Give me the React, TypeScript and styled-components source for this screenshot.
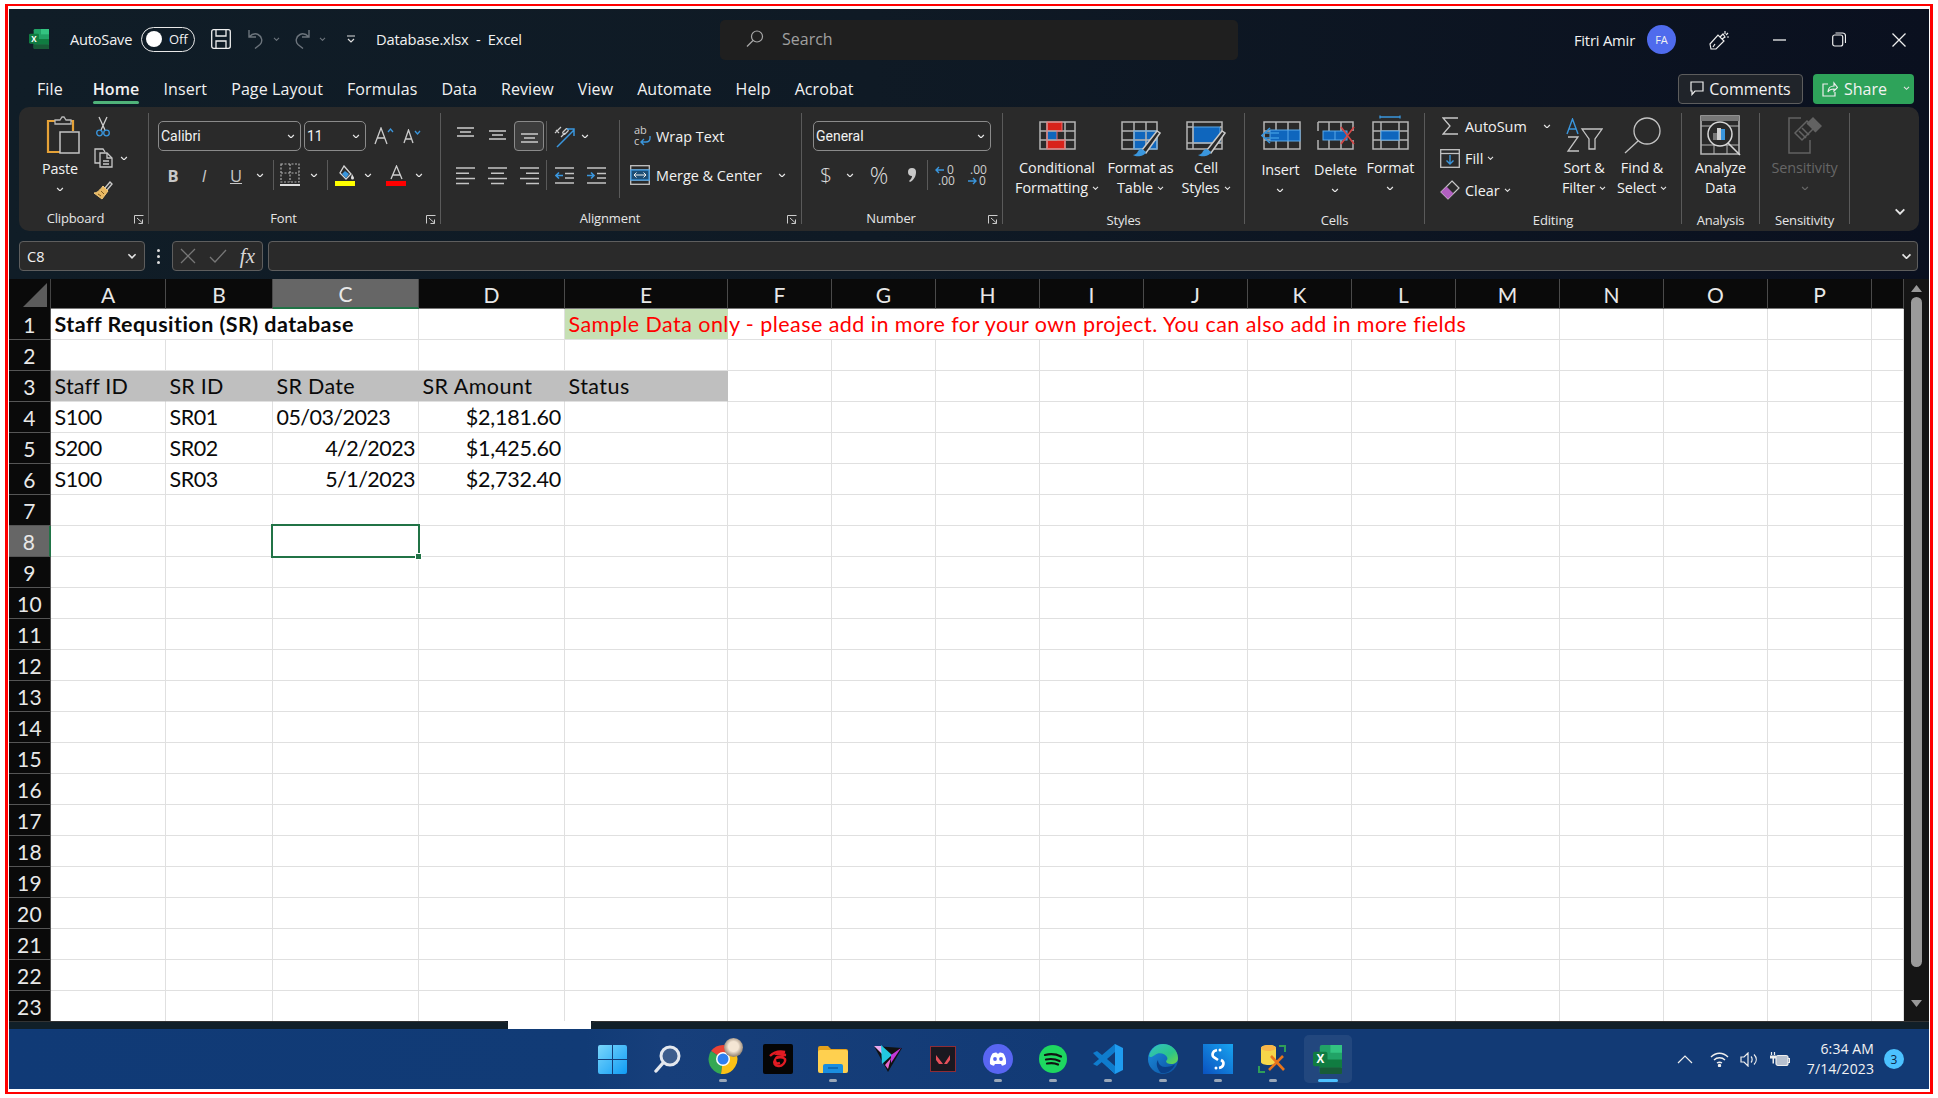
import React from 'react'
import styled, { createGlobalStyle } from 'styled-components'

const UI = `"Open Sans", "Noto Sans", sans-serif`
const CELL = `"Lato", "Liberation Sans", sans-serif`
const G = '#b4b4b4'
const B = '#3a96dd'

const GlobalStyle = createGlobalStyle`
  html, body { margin: 0; padding: 0; background: #fff; }
  #root { width: 1938px; height: 1098px; overflow: hidden; }
`

/* ---------- frame ---------- */
const Page = styled.div`
  width: 1938px;
  height: 1098px;
  padding: 4px 0 0 5px;
  box-sizing: border-box;
  background: #fff;
`
const Frame = styled.div`
  width: 1928px;
  height: 1090px;
  box-sizing: border-box;
  border-style: solid;
  border-color: #f00;
  border-width: 2px 3px;
  padding: 3px 1px;
`
const Screen = styled.div`
  width: 1920px;
  height: 1080px;
  display: flex;
  flex-direction: column;
  background: linear-gradient(90deg, #101d27 0%, #0f1a25 45%, #0a101f 100%);
  font-family: ${UI};
  color: #f2f2f2;
  overflow: hidden;
`

/* ---------- title bar ---------- */
const TitleBar = styled.div`
  height: 61px;
  display: grid;
  grid-template-columns: 711px 518px 1fr;
  align-items: center;
  flex-shrink: 0;
`
const TitleLeft = styled.div`
  display: flex;
  align-items: center;
  padding: 0 0 1px 20px;
  font-size: 14.6px;
`
const AutoSaveLabel = styled.span`
  margin: 0 8px 0 21px;
  width: 63px;
  white-space: nowrap;
  letter-spacing: -0.2px;
`
const Toggle = styled.div`
  width: 54px;
  height: 25px;
  box-sizing: border-box;
  border: 1.5px solid #e8e8e8;
  border-radius: 13px;
  display: flex;
  align-items: center;
  gap: 7px;
  padding-left: 4px;
  font-size: 13px;
  margin-right: 16px;
`
const Knob = styled.i`
  width: 16px;
  height: 16px;
  border-radius: 50%;
  background: #fff;
`
const QuickGap = styled.span<{ $w: number }>`
  width: ${p => p.$w}px;
  flex-shrink: 0;
`
const DocName = styled.span`
  white-space: pre;
  font-size: 14.7px;
  letter-spacing: -0.15px;
`
const SearchBox = styled.div`
  height: 40px;
  border-radius: 5px;
  background: #1f1f1f;
  display: flex;
  align-items: center;
  padding: 0 0 2px 26px;
  box-sizing: border-box;
  gap: 18px;
  color: #a0a0a0;
  font-size: 16px;
`
const TitleRight = styled.div`
  display: flex;
  align-items: center;
  justify-content: flex-end;
  font-size: 14.8px;
`
const UserName = styled.span`
  margin-right: 12px;
  letter-spacing: -0.2px;
`
const Avatar = styled.div`
  width: 29px;
  height: 29px;
  border-radius: 50%;
  background: #4f6bed;
  display: flex;
  align-items: center;
  justify-content: center;
  font-size: 11px;
  margin-right: 13px;
`
const CaptionButton = styled.div`
  width: 60px;
  display: flex;
  justify-content: center;
  align-items: center;
`

/* ---------- tabs ---------- */
const TabRow = styled.div`
  height: 37px;
  box-sizing: border-box;
  display: flex;
  align-items: center;
  padding: 0 15px 0 28px;
  gap: 24px;
  flex-shrink: 0;
  font-size: 16px;
`
const Tab = styled.span<{ $active?: boolean; $after?: number }>`
  position: relative;
  white-space: nowrap;
  letter-spacing: 0.1px;
  font-weight: ${p => (p.$active ? 600 : 400)};
  margin-right: ${p => p.$after || 0}px;
  ${p =>
    p.$active &&
    `&::after {
      content: '';
      position: absolute;
      left: 0;
      right: 0;
      bottom: -4px;
      height: 3px;
      border-radius: 2px;
      background: #4fb37a;
    }`}
`
const RightActions = styled.div`
  margin-left: auto;
  display: flex;
  gap: 10px;
`
const CommentsButton = styled.div`
  width: 125px;
  height: 30px;
  box-sizing: border-box;
  border: 1px solid #5d5d5d;
  border-radius: 4px;
  background: #20242a;
  display: flex;
  align-items: center;
  justify-content: center;
  gap: 5px;
  font-size: 16px;
`
const ShareButton = styled.div`
  width: 101px;
  height: 30px;
  border-radius: 4px;
  background: #2ea35a;
  display: flex;
  align-items: center;
  padding-left: 9px;
  gap: 6px;
  box-sizing: border-box;
  font-size: 16px;
`

/* ---------- ribbon ---------- */
const Ribbon = styled.div`
  margin: 0 10px;
  height: 124px;
  flex-shrink: 0;
  background: #2a2a2a;
  border-radius: 10px;
  display: flex;
  padding-top: 6px;
  box-sizing: border-box;
  position: relative;
  font-size: 14.4px;
`
const Group = styled.div<{ $w: number; $plain?: boolean }>`
  position: relative;
  width: ${p => p.$w}px;
  height: 111px;
  flex-shrink: 0;
  box-sizing: border-box;
  display: flex;
  flex-direction: column;
  border-right: ${p => (p.$plain ? 'none' : '1px solid #5a5a5a')};
`
const GroupBody = styled.div<{ $pad?: number }>`
  flex: 1;
  min-height: 0;
  display: flex;
  padding-left: ${p => p.$pad || 0}px;
`
const GroupLabel = styled.div<{ $drop?: number; $inset?: number }>`
  height: 20px;
  line-height: 20px;
  font-size: 13px;
  letter-spacing: -0.15px;
  color: #e6e6e6;
  text-align: center;
  padding-right: ${p => p.$inset || 0}px;
  margin-bottom: -${p => p.$drop ?? 4}px;
  flex-shrink: 0;
`
const Launcher = styled.div`
  position: absolute;
  right: 4px;
  bottom: 0;
  display: flex;
`
const Stack = styled.div<{ $w?: number }>`
  display: flex;
  flex-direction: column;
  gap: 9px;
  padding-top: 8px;
  ${p => (p.$w ? `width: ${p.$w}px;` : '')}
  flex-shrink: 0;
`
const ToolRow = styled.div`
  height: 30px;
  display: flex;
  align-items: center;
`
const Tool = styled.div<{ $w: number; $gap?: number }>`
  width: ${p => p.$w}px;
  margin-left: ${p => p.$gap || 0}px;
  flex-shrink: 0;
  display: flex;
  justify-content: center;
  align-items: center;
`
const ToolBox = styled(Tool)`
  height: 30px;
  box-sizing: border-box;
  border: 1px solid #8a8a8a;
  border-radius: 4px;
  background: #3d3d3d;
`
const FormatLetter = styled.span<{ $kind: 'b' | 'i' | 'u' }>`
  font-size: 16.5px;
  color: #c8c8c8;
  font-weight: ${p => (p.$kind === 'b' ? 700 : 400)};
  font-style: ${p => (p.$kind === 'i' ? 'italic' : 'normal')};
  text-decoration: ${p => (p.$kind === 'u' ? 'underline' : 'none')};
`
const NumberGlyph = styled.span<{ $size: number }>`
  font-size: ${p => p.$size}px;
  font-weight: 300;
  color: #dcdcdc;
`
const Sep = styled.i<{ $gap?: number }>`
  width: 1px;
  height: 30px;
  background: #5a5a5a;
  margin-left: ${p => p.$gap || 0}px;
  flex-shrink: 0;
`
const VSep = styled.i`
  width: 1px;
  height: 78px;
  margin-top: 7px;
  background: #5a5a5a;
  flex-shrink: 0;
`
const Combo = styled.div<{ $w: number; $gap?: number }>`
  width: ${p => p.$w}px;
  margin-left: ${p => p.$gap || 0}px;
  height: 30px;
  box-sizing: border-box;
  border: 1px solid #8a8a8a;
  border-radius: 5px;
  display: flex;
  align-items: center;
  justify-content: space-between;
  padding: 0 5px 0 2px;
  font-family: "Roboto", ${UI};
  font-size: 14px;
  flex-shrink: 0;
`
const TextTool = styled.div<{ $x?: number; $gap?: number }>`
  display: flex;
  align-items: center;
  gap: ${p => p.$gap ?? 4}px;
  margin-left: ${p => p.$x || 0}px;
  white-space: nowrap;
`
const BigButton = styled.div<{ $w: number; $muted?: boolean }>`
  width: ${p => p.$w}px;
  flex-shrink: 0;
  padding-top: 2px;
  display: flex;
  flex-direction: column;
  align-items: center;
  color: ${p => (p.$muted ? '#666' : 'inherit')};
`
const IconSlot = styled.div<{ $top?: number; $left?: number }>`
  height: 43px;
  box-sizing: border-box;
  padding-top: ${p => p.$top || 0}px;
  padding-left: ${p => p.$left || 0}px;
  display: flex;
  align-items: flex-start;
  justify-content: center;
`
const BigText = styled.div<{ $dy?: number }>`
  margin-top: ${p => p.$dy || 0}px;
  line-height: 20px;
  text-align: center;
  white-space: nowrap;
  display: flex;
  flex-direction: column;
  align-items: center;
  letter-spacing: -0.1px;
`
const BigLine = styled.span`
  display: flex;
  align-items: center;
  gap: 4px;
  height: 20px;
`
const EditStack = styled.div`
  width: 118px;
  padding-left: 14px;
  margin-top: -3px;
  display: flex;
  flex-direction: column;
  flex-shrink: 0;
`
const EditRow = styled.div`
  height: 32px;
  display: flex;
  align-items: center;
  gap: 4px;
  white-space: nowrap;
`
const EditIcon = styled.div`
  width: 22px;
  display: flex;
  justify-content: center;
`
const ClipStack = styled.div`
  display: flex;
  flex-direction: column;
  margin-top: 3px;
  gap: 12px;
  margin-left: -3px;
`
const ClipTool = styled.div`
  height: 20px;
  display: flex;
  align-items: center;
  gap: 7px;
`
const CollapseSlot = styled.div`
  position: absolute;
  right: 13px;
  bottom: 16px;
  display: flex;
`

/* ---------- formula bar ---------- */
const FormulaRow = styled.div`
  display: flex;
  align-items: center;
  height: 30px;
  margin: 10px 11px 8px 10px;
  flex-shrink: 0;
`
const NameBox = styled.div`
  width: 126px;
  height: 30px;
  box-sizing: border-box;
  border: 1px solid #5e5e5e;
  border-radius: 4px;
  background: #2a2a2a;
  display: flex;
  align-items: center;
  justify-content: space-between;
  padding: 0 7px;
  font-size: 14.5px;
`
const Dots = styled.div`
  width: 27px;
  display: flex;
  flex-direction: column;
  align-items: center;
  gap: 3px;
  & i { width: 3px; height: 3px; background: #ddd; border-radius: 50%; }
`
const FxBox = styled.div`
  width: 91px;
  height: 30px;
  box-sizing: border-box;
  border: 1px solid #5e5e5e;
  border-radius: 4px;
  background: #2a2a2a;
  display: flex;
  align-items: center;
  justify-content: space-between;
  padding: 0 7px;
  margin-right: 5px;
`
const FxMark = styled.span`
  font-family: "Liberation Serif", serif;
  font-style: italic;
  font-size: 21px;
  color: #d8d8d8;
`
const FormulaInput = styled.div`
  flex: 1;
  height: 30px;
  box-sizing: border-box;
  border: 1px solid #5e5e5e;
  border-radius: 4px;
  background: #2a2a2a;
  display: flex;
  align-items: center;
  justify-content: flex-end;
  padding-right: 5px;
`

/* ---------- sheet ---------- */
const SheetRow = styled.div`
  height: 742px;
  display: flex;
  flex-shrink: 0;
`
const SheetGrid = styled.div`
  width: 1895px;
  height: 742px;
  overflow: hidden;
  display: grid;
  grid-template-columns: 42px 115px 107px 146px 146px 163px repeat(11, 104px) 32px;
  grid-auto-rows: 31px;
  grid-template-rows: 30px;
  background: #fff;
`
const Corner = styled.div`
  background: #0a0a0a;
  display: flex;
  align-items: flex-end;
  justify-content: flex-end;
  padding: 0 3px 2px 0;
  border-right: 1px solid #444;
  box-sizing: border-box;
`
const ColHead = styled.div<{ $sel?: boolean }>`
  background: ${p => (p.$sel ? '#666' : '#0a0a0a')};
  border-right: 1px solid #4a4a4a;
  border-bottom: ${p => (p.$sel ? '2px solid #217346' : '1px solid #777')};
  box-sizing: border-box;
  padding-top: 1px;
  display: flex;
  align-items: center;
  justify-content: center;
  font-family: ${CELL};
  font-size: 21px;
  color: #e8e8e8;
`
const RowHead = styled.div<{ $sel?: boolean }>`
  background: ${p => (p.$sel ? '#666' : '#0a0a0a')};
  border-bottom: 1px solid #555;
  border-right: ${p => (p.$sel ? '2px solid #217346' : '1px solid #555')};
  box-sizing: border-box;
  display: flex;
  align-items: center;
  justify-content: center;
  font-family: ${CELL};
  font-size: 21px;
  letter-spacing: 0.3px;
  color: #e8e8e8;
`
const Cell = styled.div<{ $fill?: string; $open?: boolean; $right?: boolean; $bold?: boolean; $color?: string; $ls?: number }>`
  position: relative;
  box-sizing: border-box;
  background: ${p => p.$fill || 'transparent'};
  border-bottom: 1px solid #e0e0e0;
  border-right: ${p => (p.$open ? 'none' : `1px solid ${p.$fill ? p.$fill : '#e0e0e0'}`)};
  display: flex;
  align-items: center;
  justify-content: ${p => (p.$right ? 'flex-end' : 'flex-start')};
  padding: 0 3px 0 3.5px;
  font-family: ${CELL};
  font-size: 21.5px;
  letter-spacing: ${p => p.$ls ?? 0.45}px;
  font-weight: ${p => (p.$bold ? 700 : 400)};
  color: ${p => p.$color || '#0a0a0a'};
  white-space: nowrap;
`
const CellText = styled.span`
  position: relative;
  z-index: 1;
`
const Selection = styled.div`
  position: absolute;
  left: -2px;
  top: -2px;
  right: -2px;
  bottom: -2px;
  border: 2px solid #217346;
  z-index: 2;
  &::after {
    content: '';
    position: absolute;
    right: -4px;
    bottom: -4px;
    width: 5px;
    height: 5px;
    background: #217346;
    border: 1px solid #fff;
  }
`
const ScrollTrack = styled.div`
  width: 25px;
  background: #151515;
  display: flex;
  flex-direction: column;
  align-items: center;
  padding-top: 6px;
  box-sizing: border-box;
`
const ScrollThumb = styled.div`
  width: 11px;
  height: 670px;
  margin: 5px 0 33px;
  border-radius: 6px;
  background: #9b9b9b;
`
const Strip = styled.div`
  height: 8px;
  display: flex;
  flex-shrink: 0;
`
const StripTab = styled.div<{ $w?: number }>`
  ${p => (p.$w ? `width: ${p.$w}px;` : 'flex: 1;')}
  background: #111f28;
  border-top: 1px solid #333;
  box-sizing: border-box;
`
const StripLeft = styled(StripTab)`
  border-top-right-radius: 5px;
`
const StripRight = styled(StripTab)`
  border-top-left-radius: 5px;
`
const StripGap = styled.div`
  width: 83px;
  background: #fff;
`

/* ---------- taskbar ---------- */
const Taskbar = styled.div`
  height: 60px;
  flex-shrink: 0;
  background: linear-gradient(90deg, #103a76 0%, #113b76 30%, #173f7b 34%, #123a75 55%, #123a75 100%);
  display: flex;
  align-items: center;
  padding-left: 576px;
  position: relative;
`
const TaskItem = styled.div<{ $active?: boolean }>`
  width: ${p => (p.$active ? 48 : 55)}px;
  margin: 0 ${p => (p.$active ? 3.5 : 0)}px;
  height: 48px;
  flex-shrink: 0;
  position: relative;
  border-radius: 5px;
  display: flex;
  align-items: center;
  justify-content: center;
  background: ${p => (p.$active ? 'rgba(255,255,255,0.07)' : 'transparent')};
`
const TaskDot = styled.i<{ $active?: boolean }>`
  position: absolute;
  bottom: 1px;
  left: 50%;
  transform: translateX(-50%);
  width: ${p => (p.$active ? 20 : 8)}px;
  height: 3px;
  border-radius: 2px;
  background: ${p => (p.$active ? '#4cc2ff' : '#9aa7b8')};
`
const Tray = styled.div`
  margin-left: auto;
  display: flex;
  align-items: center;
  padding-right: 25px;
`
const Clock = styled.div`
  text-align: right;
  font-size: 14px;
  line-height: 20px;
  margin: 0 10px 0 17px;
  letter-spacing: 0.1px;
`
const NotifyBadge = styled.div`
  width: 20px;
  height: 20px;
  border-radius: 50%;
  background: #4cc2ff;
  color: #0b2545;
  font-size: 12px;
  display: flex;
  align-items: center;
  justify-content: center;
`

/* ---------- small icons ---------- */
const Chevron = ({ c = '#e4e4e4', s = 8 }: { c?: string; s?: number }) => (
  <svg width={s} height={s * 0.6} viewBox="0 0 8 5">
    <path d="M1 1l3 3 3-3" fill="none" stroke={c} strokeWidth="1.3" />
  </svg>
)
const LauncherIcon = () => (
  <svg width="10" height="9" viewBox="0 0 10 9" fill="none" stroke="#ccc">
    <path d="M.5 8.500v-8h9M3 3l5.500 5M8.500 4.500v4h-4" />
  </svg>
)
const Lines = ({ rows }: { rows: [number, number][] }) => (
  <svg width="19" height="26" viewBox="0 0 19 26" stroke="#c4c4c4" strokeWidth="1.6">
    {rows.map(([y, w], i) => (
      <path key={i} d={`M${(19 - w) / 2} ${y}h${w}`} />
    ))}
  </svg>
)
const AlignH = ({ kind }: { kind: 'l' | 'c' | 'r' }) => {
  const x = kind === 'l' ? 0 : kind === 'c' ? 3 : 6
  return (
    <svg width="19" height="19" viewBox="0 0 19 19" stroke="#c4c4c4" strokeWidth="1.6">
      <path d="M0 2h19M0 12.500h19" />
      <path d={`M${x} 7.300h13M${x} 17.500h13`} />
    </svg>
  )
}
const Indent = ({ out }: { out?: boolean }) => (
  <svg width="19" height="19" viewBox="0 0 19 19" fill="none" strokeWidth="1.6">
    <path d="M0 2h19M0 17h19" stroke="#c4c4c4" />
    <path d="M10 7.500h9M10 12h9" stroke="#c4c4c4" />
    {out ? <path d="M8 9.500H1M4 6.500l-3 3 3 3" stroke={B} /> : <path d="M0 9.500h7M4 6.500l3 3-3 3" stroke={B} />}
  </svg>
)

/* ---------- ribbon drawings ---------- */
const PasteIcon = () => (
  <svg width="36" height="40" viewBox="0 0 36 40" fill="none">
    <path d="M12 6H2v31h12" stroke="#e6a237" strokeWidth="2.200" />
    <path d="M22 6h5v10" stroke="#e6a237" strokeWidth="2.200" />
    <path d="M9 9V5h5l2-3h2l2 3h5v4z" fill="#2a2a2a" stroke="#b9b9b9" strokeWidth="1.300" />
    <rect x="14" y="17" width="19" height="21" fill="#2a2a2a" stroke="#c4c4c4" strokeWidth="1.500" />
  </svg>
)
const CutIcon = () => (
  <svg width="14" height="21" viewBox="0 0 14 21" fill="none" strokeWidth="1.300">
    <path d="M3 1l6 13M11 1L5 14" stroke="#cfcfcf" />
    <circle cx="3.500" cy="17" r="2.800" stroke={B} />
    <circle cx="10.500" cy="17" r="2.800" stroke={B} />
  </svg>
)
const CopyIcon = () => (
  <svg width="19" height="20" viewBox="0 0 19 20" fill="none" stroke="#c8c8c8" strokeWidth="1.300">
    <path d="M6 15H1V1h8l2 3" />
    <path d="M6 5h7l5 5v9H6z" fill="#2a2a2a" />
    <path d="M13 5v5h5M9 13h6M9 16h6" />
  </svg>
)
const BrushIcon = () => (
  <svg width="20" height="20" viewBox="0 0 20 20" fill="none">
    <path d="M12 8l5-6 2 2-5 6" stroke="#c8c8c8" strokeWidth="1.400" />
    <path d="M10 6l5 5-6 8-8-6c3 0 6-3 9-7z" fill="#e8b862" stroke="#f0c878" strokeWidth="1" />
    <path d="M5 14l3 2M8 11l3 3" stroke="#7c5a20" strokeWidth="1" />
  </svg>
)
const BorderIcon = () => (
  <svg width="20" height="24" viewBox="0 0 20 24" fill="none" stroke="#b0b0b0" strokeWidth="1.200" strokeDasharray="2 1.500">
    <path d="M1 1h18v18H1zM10 1v18M1 10h18" />
    <path d="M0 22h20" stroke="#ddd" strokeWidth="2" strokeDasharray="none" />
  </svg>
)
const FillIcon = () => (
  <svg width="21" height="21" viewBox="0 0 21 21" fill="none">
    <path d="M9 1l7 8-5 5-6-6z" stroke="#d4d4d4" strokeWidth="1.300" />
    <path d="M10 6l4 3-3 4-4-4z" fill={B} />
    <path d="M17 9c1 2 2 3 2 4a1.500 1.500 0 01-3 0c0-1 .5-2 1-4z" fill="#ddd" />
    <rect x="0" y="16" width="20" height="5" fill="#ff0" />
  </svg>
)
const FontColorIcon = () => (
  <svg width="21" height="21" viewBox="0 0 21 21" fill="none">
    <path d="M5 14L10.500 1 16 14M7 10h7" stroke="#cfcfcf" strokeWidth="1.300" />
    <rect x="0" y="16" width="20" height="5" fill="#f00" />
  </svg>
)
const OrientIcon = () => (
  <svg width="21" height="23" viewBox="0 0 21 23" fill="none">
    <path d="M1 8l6-6M2 5l3 3M7 12l4-4M12 4l-3 3c-1 1 1 3 2 2l3-3c1-1-1-3-2-2z" stroke="#cfcfcf" strokeWidth="1.200" />
    <path d="M3 22L20 5M13 4h7v7" stroke={B} strokeWidth="1.500" />
  </svg>
)
const WrapIcon = () => (
  <svg width="18" height="22" viewBox="0 0 18 22" fill="none" overflow="visible">
    <text x="0" y="8.500" fill="#cfcfcf" fontSize="11" fontFamily="Open Sans">ab</text>
    <text x="0" y="20" fill="#cfcfcf" fontSize="11" fontFamily="Open Sans">c</text>
    <path d="M16 11v2c0 3-2 4-4 4H7M10 14l-3 3 3 3" stroke={B} strokeWidth="1.400" />
  </svg>
)
const MergeIcon = () => (
  <svg width="20" height="20" viewBox="0 0 20 20" fill="none" strokeWidth="1.300">
    <rect x=".7" y=".7" width="18.600" height="18.600" stroke="#c4c4c4" />
    <path d="M1 5h18M1 15h18" stroke="#c4c4c4" />
    <rect x="1" y="5" width="18" height="10" fill="#1d4e75" stroke={B} />
    <path d="M4 10h12M6.500 7.500L4 10l2.500 2.500M13.500 7.500L16 10l-2.500 2.500" stroke="#eee" strokeWidth="1" />
  </svg>
)
const CommaIcon = () => (
  <svg width="10" height="16" viewBox="0 0 10 16">
    <path d="M5 1a4 4 0 014 4c0 4-2 8-6 10l-1-1c2-2 3-3 3-5a4 4 0 010-8z" fill="#c8c8c8" />
  </svg>
)
const IncDecimal = () => (
  <svg width="20" height="20" viewBox="0 0 20 20" fill="none" overflow="visible">
    <path d="M1 5h8M4 2L1 5l3 3" stroke={B} strokeWidth="1.400" />
    <text x="12" y="9" fontSize="12" fill="#cfcfcf" fontFamily="Open Sans">0</text>
    <text x="3" y="20" fontSize="12" fill="#cfcfcf" fontFamily="Open Sans">.00</text>
  </svg>
)
const DecDecimal = () => (
  <svg width="20" height="20" viewBox="0 0 20 20" fill="none" overflow="visible">
    <text x="3" y="9" fontSize="12" fill="#cfcfcf" fontFamily="Open Sans">.00</text>
    <path d="M1 16h8M6 13l3 3-3 3" stroke={B} strokeWidth="1.400" />
    <text x="12" y="20" fontSize="12" fill="#cfcfcf" fontFamily="Open Sans">0</text>
  </svg>
)
const CondIcon = () => (
  <svg width="37" height="29" viewBox="0 0 37 29" fill="none">
    <rect x="8" y="1" width="15" height="9" fill="#d8221a" />
    <rect x="8" y="10" width="10" height="9" fill="#0f66bd" />
    <rect x="8" y="19" width="18" height="9" fill="#d8221a" />
    <path d="M1 1h35v27H1zM1 10h35M1 19h35M8 1v27M26 1v27" stroke="#b4b4b4" strokeWidth="1.500" />
    <path d="M8 1h15v9H18v9h8v9H8z" stroke="#f06a6a" strokeWidth="1" />
  </svg>
)
const PaintBrush = ({ x, y }: { x: number; y: number }) => (
  <g transform={`translate(${x} ${y})`}>
    <path d="M9 20L24 1l3 2-14 20z" fill="#2a2a2a" stroke="#c9c9c9" strokeWidth="1.500" />
    <path d="M9 19c-3 0-4 2-5 4-1 1-3 2-4 2 3 2 11 2 13-3z" fill={B} />
  </g>
)
const TableStyleIcon = () => (
  <svg width="40" height="36" viewBox="0 0 40 36" fill="none">
    <rect x="13" y="10" width="23" height="18" fill="#0f66bd" />
    <path d="M1 1h35v27H1zM1 10h35M1 19h35M13 1v27M25 1v27" stroke={G} strokeWidth="1.500" />
    <path d="M13 10h23v18H13z" stroke="#5aa8e8" strokeWidth="1" />
    <PaintBrush x={12} y={9} />
  </svg>
)
const CellStyleIcon = () => (
  <svg width="40" height="36" viewBox="0 0 40 36" fill="none">
    <rect x="7" y="6" width="27" height="16" fill="#0f66bd" stroke="#5aa8e8" />
    <path d="M1 1h35v27H1zM1 6h6M34 6h2M7 1v27M1 22h35M26 22v6" stroke={G} strokeWidth="1.500" />
    <PaintBrush x={12} y={9} />
  </svg>
)
const InsertIcon = () => (
  <svg width="40" height="29" viewBox="0 0 40 29" fill="none">
    <path d="M3 1h36v27H3zM3 10h36M3 19h36M15 1v27M27 1v27" stroke={G} strokeWidth="1.500" />
    <rect x="9" y="9" width="30" height="11" fill="#0f66bd" stroke="#5aa8e8" />
    <path d="M27 9v11" stroke="#5aa8e8" />
    <path d="M18 12H3M18 17H3M9 7L1 14.500 9 22" stroke={B} strokeWidth="1.600" />
  </svg>
)
const DeleteIcon = () => (
  <svg width="38" height="29" viewBox="0 0 38 29" fill="none">
    <path d="M1 1h35v9M36 19v9H1v-9M1 1v9M12 1v9M24 1v9M12 19v9M24 19v9" stroke={G} strokeWidth="1.500" />
    <rect x="6" y="10" width="24" height="9" fill="#0f66bd" stroke="#5aa8e8" />
    <path d="M18 10v9" stroke="#5aa8e8" />
    <path d="M24 6l13 17M37 6L24 23" stroke="#d64545" strokeWidth="1.600" />
  </svg>
)
const FormatIcon = () => (
  <svg width="37" height="35" viewBox="0 0 37 35" fill="none">
    <path d="M8 2h20M8 .5v3M28 .5v3" stroke={B} strokeWidth="1.300" />
    <path d="M1 7h35v27H1zM1 16h35M1 25h35M9 7v27M27 7v27" stroke={G} strokeWidth="1.500" />
    <rect x="9" y="16" width="18" height="9" fill="#0f66bd" stroke="#5aa8e8" />
  </svg>
)
const SigmaIcon = () => (
  <svg width="17" height="18" viewBox="0 0 17 18" fill="none" stroke="#c8c8c8" strokeWidth="1.300">
    <path d="M16 1H1l7 8-7 8h15" />
  </svg>
)
const FillDownIcon = () => (
  <svg width="20" height="19" viewBox="0 0 20 19" fill="none">
    <rect x=".7" y=".7" width="18.600" height="17.600" stroke="#c4c4c4" strokeWidth="1.300" />
    <path d="M1 4.500h18" stroke="#c4c4c4" strokeWidth="1.300" />
    <path d="M10 6v9M6.500 11.500L10 15l3.500-3.500" stroke={B} strokeWidth="1.400" />
  </svg>
)
const ClearIcon = () => (
  <svg width="20" height="20" viewBox="0 0 20 20" fill="none">
    <path d="M12 1l7 7-11 11-7-7z" stroke="#c8c8c8" strokeWidth="1.200" />
    <path d="M6.500 6.500l7 7L8 19l-7-7z" fill="#b15fc0" />
  </svg>
)
const SortIcon = () => (
  <svg width="37" height="35" viewBox="0 0 37 35" fill="none">
    <path d="M1 16L6.500 1 12 16M3 11h7" stroke={B} strokeWidth="1.400" />
    <path d="M2 19h10L2 33h11" stroke="#c4c4c4" strokeWidth="1.300" />
    <path d="M16 11h20l-7 10v10h-6V21z" stroke="#c4c4c4" strokeWidth="1.300" />
  </svg>
)
const FindIcon = () => (
  <svg width="37" height="37" viewBox="0 0 37 37" fill="none" stroke="#c4c4c4" strokeWidth="1.300">
    <circle cx="23" cy="14" r="13" />
    <path d="M14 24L1 36" />
  </svg>
)
const AnalyzeIcon = () => (
  <svg width="41" height="41" viewBox="0 0 41 41" fill="none">
    <path d="M1 1h38v38H1z" stroke={G} strokeWidth="1.600" />
    <rect x="1" y="1" width="38" height="5" fill="#777" />
    <path d="M1 11h38M1 30h38M14 30v9M27 30v9" stroke={G} strokeWidth="1" />
    <circle cx="20" cy="19" r="12" fill="#2a2a2a" stroke="#d8d8d8" strokeWidth="1.500" />
    <rect x="13" y="18" width="4" height="7" fill="#777" />
    <rect x="17" y="13" width="4" height="12" fill="#cfcfcf" />
    <rect x="21" y="14" width="4" height="11" fill={B} />
    <path d="M28 28l12 12" stroke="#d8d8d8" strokeWidth="1.600" />
  </svg>
)
const SensitivityIcon = () => (
  <svg width="34" height="39" viewBox="0 0 34 39" fill="none" stroke="#626262" strokeWidth="1.500">
    <path d="M13 3H1v35h21V25" />
    <path d="M7 18L19 6l7 7-12 12z" />
    <path d="M11 16l7 7M14 13l7 7" />
    <path d="M19 9l6-6 8 8-6 6" fill="#626262" />
  </svg>
)

/* ---------- title icons ---------- */
const ExcelLogo = ({ s }: { s: number }) => (
  <svg width={s} height={s} viewBox="0 0 30 30">
    <rect x="7" y="0" width="23" height="30" rx="2" fill="#21a366" />
    <rect x="18" y="0" width="12" height="8" fill="#33c481" />
    <rect x="7" y="15" width="23" height="8" fill="#107c41" />
    <rect x="7" y="23" width="23" height="7" rx="1" fill="#185c37" />
    <rect x="0" y="7" width="15" height="15" rx="2" fill="#107c41" />
    <text x="7.500" y="19" textAnchor="middle" fontSize="12" fontWeight="700" fill="#fff" fontFamily="Open Sans">X</text>
  </svg>
)
const SaveIcon = () => (
  <svg width="20" height="20" viewBox="0 0 20 20" fill="none" stroke="#eee" strokeWidth="1.300">
    <rect x=".7" y=".7" width="18.600" height="18.600" rx="2" />
    <path d="M5 1v6h10V1M5 19v-7h10v7" />
  </svg>
)
const UndoIcon = () => (
  <svg width="18" height="20" viewBox="0 0 18 20" fill="none" stroke="#6c747c" strokeWidth="1.400">
    <path d="M2 1v7h7M2 8c3-3 6-4 9-2.500 4 2 5 7 2 10l-5 4" />
  </svg>
)
const RedoIcon = () => (
  <svg width="18" height="20" viewBox="0 0 18 20" fill="none" stroke="#6c747c" strokeWidth="1.400">
    <path d="M16 1v7H9M16 8c-3-3-6-4-9-2.500-4 2-5 7-2 10l5 4" />
  </svg>
)
const CustomizeIcon = () => (
  <svg width="10" height="9" viewBox="0 0 10 9" fill="none" stroke="#ddd" strokeWidth="1.200">
    <path d="M1 1h8M2 4l3 3 3-3" />
  </svg>
)
const SearchGlass = () => (
  <svg width="18" height="17" viewBox="0 0 18 17" fill="none" stroke="#a8a8a8" strokeWidth="1.200">
    <circle cx="11" cy="6.500" r="5.500" />
    <path d="M7 10.500L1 16.500" />
  </svg>
)
const PenIcon = () => (
  <svg width="22" height="20" viewBox="0 0 22 20" fill="none" stroke="#eee" strokeWidth="1.200">
    <path d="M2 14L10 5l6 6-8 8H3zM5 17l2-3" />
    <path d="M12 7l3-3 2 3-3 2M17 1v3M20 3l-2 2M21 7h-2" />
  </svg>
)
const MinIcon = () => (
  <svg width="13" height="2" viewBox="0 0 13 2"><path d="M0 1h13" stroke="#eee" strokeWidth="1.300" /></svg>
)
const RestoreIcon = () => (
  <svg width="14" height="15" viewBox="0 0 14 15" fill="none" stroke="#eee" strokeWidth="1.200">
    <rect x=".7" y="3" width="10" height="11" rx="2" />
    <path d="M3.500 1h7a3 3 0 013 3v7" />
  </svg>
)
const CloseIcon = () => (
  <svg width="14" height="14" viewBox="0 0 14 14" stroke="#eee" strokeWidth="1.300"><path d="M.5.5l13 13M13.500.500l-13 13" /></svg>
)
const CommentIcon = () => (
  <svg width="14" height="15" viewBox="0 0 14 15" fill="none" stroke="#eee" strokeWidth="1.200"><path d="M1 1h12v9H5l-3 3.500V10H1z" /></svg>
)
const ShareIcon = () => (
  <svg width="16" height="16" viewBox="0 0 16 16" fill="none" stroke="#eee" strokeWidth="1.200">
    <path d="M6 3H1v12h12v-4M6 11c0-4 3-6 6-6V2l3.500 4.500L12 10V8c-3 0-5 1-6 3z" />
  </svg>
)

/* ---------- taskbar icons ---------- */
const WinLogo = () => (
  <svg width="29" height="29" viewBox="0 0 29 29">
    <defs>
      <linearGradient id="win" x1="0" y1="0" x2="1" y2="1">
        <stop offset="0" stopColor="#7ad6fb" />
        <stop offset="1" stopColor="#0f9cf5" />
      </linearGradient>
    </defs>
    <path d="M0 2a2 2 0 012-2h12v14H0zM15 0h12a2 2 0 012 2v12H15zM0 15h14v14H2a2 2 0 01-2-2zM15 15h14v12a2 2 0 01-2 2H15z" fill="url(#win)" />
  </svg>
)
const TaskSearch = () => (
  <svg width="27" height="29" viewBox="0 0 27 29" fill="none">
    <circle cx="16" cy="11" r="9" fill="#3d5d8c" stroke="#e4e8ee" strokeWidth="3" />
    <path d="M9 18L2 26" stroke="#e4e8ee" strokeWidth="3.400" strokeLinecap="round" />
  </svg>
)
const ChromeIcon = () => (
  <svg width="30" height="30" viewBox="0 0 30 30">
    <path d="M15 15L3 7A15 15 0 0127 7z" fill="#ea4335" />
    <path d="M15 15L3 7a15 15 0 0010 23z" fill="#34a853" />
    <path d="M15 15l12-8a15 15 0 01-14 23z" fill="#fbc116" />
    <circle cx="15" cy="15" r="7" fill="#fff" />
    <circle cx="15" cy="15" r="5.500" fill="#2f7ff0" />
  </svg>
)
const ChromeBadge = styled.div`
  position: absolute;
  left: 29px;
  top: 3px;
  width: 19px;
  height: 19px;
  border-radius: 50%;
  background: radial-gradient(circle at 50% 45%, #f4e6d4 0 35%, #8a7a6a 75%, #c0b6a8 100%);
`
const GarenaIcon = () => (
  <svg width="30" height="30" viewBox="0 0 30 30" fill="none">
    <rect width="30" height="30" rx="2" fill="#050505" />
    <path d="M7 12c4-4 10-5 15-4-3 0-5 1-7 2l8 1c-4 0-8 1-10 3 3-1 7-1 9 1 1 3-3 8-7 7-3 0-5-3-3-6 0 3 2 4 5 3" stroke="#e21b23" strokeWidth="2.400" />
  </svg>
)
const FolderIcon = () => (
  <svg width="30" height="27" viewBox="0 0 30 27">
    <path d="M0 2a2 2 0 012-2h8l3 3h15a2 2 0 012 2v4H0z" fill="#e4a11b" />
    <rect x="0" y="4" width="30" height="23" rx="2" fill="#ffd04f" />
    <path d="M5 27v-7a2 2 0 012-2h16a2 2 0 012 2v7z" fill="#1a8ee0" />
    <path d="M10 22h10" stroke="#0d5fa8" strokeWidth="1.500" />
  </svg>
)
const VividIcon = () => (
  <svg width="28" height="28" viewBox="0 0 28 28">
    <path d="M0 1l14 26L28 3z" fill="#111" />
    <path d="M0 1h8l3 11z" fill="#e8a8ee" />
    <path d="M7 0l11 10-10 9z" fill="#22c8e0" />
    <path d="M17 10l10-7-10 15z" fill="#c238d8" />
    <path d="M11 20l6-7-3 11z" fill="#e86ad0" />
  </svg>
)
const ValorantIcon = () => (
  <svg width="26" height="26" viewBox="0 0 26 26">
    <rect x=".5" y=".5" width="25" height="25" fill="#1a1820" stroke="#8f2c36" />
    <path d="M6 9l7 9H9L6 14zM20 9v5l-3 4h-3z" fill="#e8505b" />
  </svg>
)
const DiscordIcon = () => (
  <svg width="30" height="30" viewBox="0 0 30 30">
    <circle cx="15" cy="15" r="15" fill="#5865f2" />
    <path d="M7 20c-.5-4 .5-8 2.500-10.500 1.500-.7 3-1 4-1l.5 1h2l.5-1c1 0 2.500.3 4 1C22.500 12 23.500 16 23 20c-1.500 1-2.800 1.500-4 1.700l-1-1.700h-6l-1 1.700C9.800 21.500 8.500 21 7 20z" fill="#fff" />
    <circle cx="12" cy="15" r="1.900" fill="#5865f2" />
    <circle cx="18" cy="15" r="1.900" fill="#5865f2" />
  </svg>
)
const SpotifyIcon = () => (
  <svg width="28" height="28" viewBox="0 0 28 28" fill="none">
    <circle cx="14" cy="14" r="14" fill="#1ed760" />
    <path d="M6 10c6-1.500 11-1 16 1.500M7 14.500c5-1 9-.7 13.500 1.500M8 18.500c4-.8 8-.5 11 1" stroke="#111" strokeWidth="2.200" strokeLinecap="round" />
  </svg>
)
const VsCodeIcon = () => (
  <svg width="30" height="30" viewBox="0 0 30 30">
    <path d="M22 0l8 4v22l-8 4-13-12z" fill="#1f9cf0" />
    <path d="M22 0v30L9 18l-5 4-4-2 6-5-6-6 4-2 5 4z" fill="#0f7ccd" />
    <path d="M22 8l-8 7 8 7z" fill="#123a75" />
  </svg>
)
const EdgeIcon = () => (
  <svg width="30" height="30" viewBox="0 0 30 30">
    <defs>
      <linearGradient id="edgeA" x1="0" y1="0" x2="1" y2="1">
        <stop offset="0" stopColor="#34c1c4" />
        <stop offset=".6" stopColor="#2bc48a" />
        <stop offset="1" stopColor="#6ed64a" />
      </linearGradient>
      <linearGradient id="edgeB" x1="0" y1="0" x2="1" y2="1">
        <stop offset="0" stopColor="#1c8fe0" />
        <stop offset="1" stopColor="#0c4f9e" />
      </linearGradient>
    </defs>
    <circle cx="15" cy="15" r="15" fill="url(#edgeB)" />
    <path d="M1 12C3 4 9 0 15 0c8 0 15 6 15 14 0 4-3 6-7 6-3 0-5-1-5-3 1-1 2-2 1-4-2-4-9-5-12-2-3 2-5 3-6 1z" fill="url(#edgeA)" />
    <path d="M10 16c0 4 3 7 7 7 4 0 8-1 10-3-2 6-8 10-14 9-3-3-6-9-3-13z" fill="#0a3f88" />
  </svg>
)
const SBlueIcon = () => (
  <svg width="30" height="30" viewBox="0 0 30 30" fill="none">
    <defs>
      <linearGradient id="sb" x1="0" y1="1" x2="1" y2="0">
        <stop offset="0" stopColor="#0a52c0" />
        <stop offset="1" stopColor="#18a4f0" />
      </linearGradient>
    </defs>
    <rect width="30" height="30" fill="url(#sb)" />
    <path d="M14 6c-5 1-6 6-2 8l3 2M16 24c5-1 6-6 2-8" stroke="#fff" strokeWidth="2.600" />
    <circle cx="17" cy="6" r="1.500" fill="#fff" />
    <circle cx="13" cy="24" r="1.500" fill="#fff" />
  </svg>
)
const DbToolIcon = () => (
  <svg width="29" height="30" viewBox="0 0 29 30" fill="none">
    <path d="M3 4c0-4 15-4 15 0v14c0 4-15 4-15 0z" fill="#f5d64a" />
    <ellipse cx="10.500" cy="4" rx="7.500" ry="3" fill="#f8b54a" />
    <path d="M21 2h6v6M1 22v6h6" stroke="#2f9e58" strokeWidth="2" />
    <path d="M11 26l14-14M13 12l13 14" stroke="#e8751c" strokeWidth="2.600" />
  </svg>
)
const BatteryIcon = () => (
  <svg width="20" height="15" viewBox="0 0 20 15" fill="none" stroke="#eee" strokeWidth="1.200">
    <rect x="6" y="3.500" width="12" height="10" rx="2" fill="#eee" fillOpacity=".75" />
    <path d="M18 6.500h1.500v4H18" />
    <path d="M1.500 0v3M4.500 0v3" />
    <path d="M0 3.500h6v3H4v5H2.500v-5H0z" fill="#eee" stroke="none" />
  </svg>
)

/* ---------- data ---------- */
const COLUMNS = ['A', 'B', 'C', 'D', 'E', 'F', 'G', 'H', 'I', 'J', 'K', 'L', 'M', 'N', 'O', 'P', '']
const TABS = ['Insert', 'Page Layout', 'Formulas', 'Data', 'Review', 'View', 'Automate', 'Help', 'Acrobat']

type CellData = { text: string; right?: boolean; bold?: boolean; color?: string; fill?: string; open?: boolean; ls?: number }
const HEAD = '#bfbfbf'
// Lato digits run wider than Calibri's, so number-like cells get tighter tracking
const CODE = -0.47
const DATE = -0.55
const MONEY = -0.22
const cells: Record<string, CellData> = {
  A1: { text: 'Staff Requsition (SR) database', bold: true, open: true },
  B1: { text: '', open: true },
  E1: { text: 'Sample Data only - please add in more for your own project. You can also add in more fields', color: '#f00', fill: '#c6e0b4', open: true },
  F1: { text: '', open: true }, G1: { text: '', open: true }, H1: { text: '', open: true }, I1: { text: '', open: true },
  J1: { text: '', open: true }, K1: { text: '', open: true }, L1: { text: '', open: true },
  A3: { text: 'Staff ID', fill: HEAD, ls: 0.2 }, B3: { text: 'SR ID', fill: HEAD, ls: 0.2 }, C3: { text: 'SR Date', fill: HEAD, ls: 0.3 },
  D3: { text: 'SR Amount', fill: HEAD }, E3: { text: 'Status', fill: HEAD },
  A4: { text: 'S100', ls: CODE }, B4: { text: 'SR01', ls: CODE }, C4: { text: '05/03/2023', ls: DATE }, D4: { text: '$2,181.60', right: true, ls: MONEY },
  A5: { text: 'S200', ls: CODE }, B5: { text: 'SR02', ls: CODE }, C5: { text: '4/2/2023', right: true, ls: DATE }, D5: { text: '$1,425.60', right: true, ls: MONEY },
  A6: { text: 'S100', ls: CODE }, B6: { text: 'SR03', ls: CODE }, C6: { text: '5/1/2023', right: true, ls: DATE }, D6: { text: '$2,732.40', right: true, ls: MONEY },
}

const TASK_ICONS: { icon: React.ReactNode; dot?: boolean; badge?: boolean; active?: boolean }[] = [
  { icon: <WinLogo /> },
  { icon: <TaskSearch /> },
  { icon: <ChromeIcon />, dot: true, badge: true },
  { icon: <GarenaIcon /> },
  { icon: <FolderIcon />, dot: true },
  { icon: <VividIcon /> },
  { icon: <ValorantIcon /> },
  { icon: <DiscordIcon />, dot: true },
  { icon: <SpotifyIcon />, dot: true },
  { icon: <VsCodeIcon />, dot: true },
  { icon: <EdgeIcon />, dot: true },
  { icon: <SBlueIcon />, dot: true },
  { icon: <DbToolIcon />, dot: true },
  { icon: <ExcelLogo s={29} />, active: true },
]

function Sheet() {
  return (
    <SheetGrid>
      <Corner>
        <svg width="24" height="24" viewBox="0 0 24 24"><path d="M24 0v24H0z" fill="#5c5c5c" /></svg>
      </Corner>
      {COLUMNS.map(c => (
        <ColHead key={c || 'q'} $sel={c === 'C'}>{c}</ColHead>
      ))}
      {Array.from({ length: 23 }, (_, i) => i + 1).map(row => (
        <React.Fragment key={row}>
          <RowHead $sel={row === 8}>{row}</RowHead>
          {COLUMNS.map(c => {
            const d = cells[c + row]
            return (
              <Cell key={c} $fill={d?.fill} $open={d?.open} $right={d?.right} $bold={d?.bold} $color={d?.color} $ls={d?.ls}>
                {d?.text ? <CellText>{d.text}</CellText> : null}
                {c === 'C' && row === 8 ? <Selection /> : null}
              </Cell>
            )
          })}
        </React.Fragment>
      ))}
    </SheetGrid>
  )
}

export default function App() {
  return (
    <Page>
      <GlobalStyle />
      <Frame>
        <Screen>
          <TitleBar>
            <TitleLeft>
              <ExcelLogo s={20} />
              <AutoSaveLabel>AutoSave</AutoSaveLabel>
              <Toggle><Knob />Off</Toggle>
              <SaveIcon />
              <QuickGap $w={16} />
              <UndoIcon />
              <QuickGap $w={8} />
              <Chevron c="#6c747c" s={7} />
              <QuickGap $w={13} />
              <RedoIcon />
              <QuickGap $w={8} />
              <Chevron c="#6c747c" s={7} />
              <QuickGap $w={20} />
              <CustomizeIcon />
              <QuickGap $w={20} />
              <DocName>Database.xlsx  -  Excel</DocName>
            </TitleLeft>
            <SearchBox><SearchGlass />Search</SearchBox>
            <TitleRight>
              <UserName>Fitri Amir</UserName>
              <Avatar>FA</Avatar>
              <CaptionButton><PenIcon /></CaptionButton>
              <CaptionButton><MinIcon /></CaptionButton>
              <CaptionButton><RestoreIcon /></CaptionButton>
              <CaptionButton><CloseIcon /></CaptionButton>
            </TitleRight>
          </TitleBar>

          <TabRow>
            <Tab $after={6}>File</Tab>
            <Tab $active>Home</Tab>
            {TABS.map(t => <Tab key={t}>{t}</Tab>)}
            <RightActions>
              <CommentsButton><CommentIcon />Comments</CommentsButton>
              <ShareButton><ShareIcon />Share<QuickGap $w={4} /><Chevron s={7} /></ShareButton>
            </RightActions>
          </TabRow>

          <Ribbon>
            <Group $w={130}>
              <GroupBody $pad={5}>
                <BigButton $w={72}>
                  <IconSlot $left={8}><PasteIcon /></IconSlot>
                  <BigText $dy={1}>Paste<BigLine><Chevron /></BigLine></BigText>
                </BigButton>
                <ClipStack>
                  <ClipTool><Tool $w={20}><CutIcon /></Tool></ClipTool>
                  <ClipTool><Tool $w={20}><CopyIcon /></Tool><Chevron /></ClipTool>
                  <ClipTool><Tool $w={20}><BrushIcon /></Tool></ClipTool>
                </ClipStack>
              </GroupBody>
              <GroupLabel $inset={16}>Clipboard</GroupLabel>
              <Launcher><LauncherIcon /></Launcher>
            </Group>

            <Group $w={292}>
              <GroupBody $pad={9}>
                <Stack>
                  <ToolRow>
                    <Combo $w={143}>Calibri<Chevron /></Combo>
                    <Combo $w={62} $gap={3}>11<Chevron /></Combo>
                    <Tool $w={30} $gap={3}>
                      <svg width="20" height="18" viewBox="0 0 20 18" fill="none"><path d="M1 17L7 1l6 16M3 11h8" stroke="#ccc" strokeWidth="1.300" /><path d="M14 5l2.500-3L19 5" stroke={B} strokeWidth="1.300" /></svg>
                    </Tool>
                    <Tool $w={26}>
                      <svg width="18" height="15" viewBox="0 0 18 15" fill="none"><path d="M1 14L5.500 1 10 14M2.500 10h6" stroke="#ccc" strokeWidth="1.300" /><path d="M12 2l2.500 3L17 2" stroke={B} strokeWidth="1.300" /></svg>
                    </Tool>
                  </ToolRow>
                  <ToolRow>
                    <Tool $w={30}><FormatLetter $kind="b">B</FormatLetter></Tool>
                    <Tool $w={32}><FormatLetter $kind="i">I</FormatLetter></Tool>
                    <Tool $w={32}><FormatLetter $kind="u">U</FormatLetter></Tool>
                    <Tool $w={16}><Chevron /></Tool>
                    <Sep $gap={5} />
                    <Tool $w={32}><BorderIcon /></Tool>
                    <Tool $w={16}><Chevron /></Tool>
                    <Sep $gap={5} />
                    <Tool $w={34}><FillIcon /></Tool>
                    <Tool $w={12}><Chevron /></Tool>
                    <Tool $w={36} $gap={4}><FontColorIcon /></Tool>
                    <Tool $w={10}><Chevron /></Tool>
                  </ToolRow>
                </Stack>
              </GroupBody>
              <GroupLabel $inset={22}>Font</GroupLabel>
              <Launcher><LauncherIcon /></Launcher>
            </Group>

            <Group $w={361}>
              <GroupBody $pad={8}>
                <Stack $w={170}>
                  <ToolRow>
                    <Tool $w={32}><Lines rows={[[5, 17], [9, 11], [13, 17]]} /></Tool>
                    <Tool $w={33}><Lines rows={[[8, 17], [12, 11], [16, 17]]} /></Tool>
                    <ToolBox $w={30}><Lines rows={[[11, 17], [15, 11], [19, 17]]} /></ToolBox>
                    <Sep $gap={2} />
                    <Tool $w={34}><OrientIcon /></Tool>
                    <Tool $w={8}><Chevron /></Tool>
                  </ToolRow>
                  <ToolRow>
                    <Tool $w={32}><AlignH kind="l" /></Tool>
                    <Tool $w={33}><AlignH kind="c" /></Tool>
                    <Tool $w={30}><AlignH kind="r" /></Tool>
                    <Sep $gap={2} />
                    <Tool $w={34}><Indent out /></Tool>
                    <Tool $w={30}><Indent /></Tool>
                  </ToolRow>
                </Stack>
                <VSep />
                <Stack>
                  <ToolRow><TextTool $x={14}><WrapIcon />Wrap Text</TextTool></ToolRow>
                  <ToolRow><TextTool $x={10} $gap={6}><MergeIcon />Merge &amp; Center<QuickGap $w={4} /><Chevron /></TextTool></ToolRow>
                </Stack>
              </GroupBody>
              <GroupLabel $inset={22}>Alignment</GroupLabel>
              <Launcher><LauncherIcon /></Launcher>
            </Group>

            <Group $w={201}>
              <GroupBody $pad={11}>
                <Stack>
                  <ToolRow><Combo $w={178}>General<Chevron /></Combo></ToolRow>
                  <ToolRow>
                    <Tool $w={26}><NumberGlyph $size={21}>$</NumberGlyph></Tool>
                    <Tool $w={22}><Chevron /></Tool>
                    <Tool $w={36}><NumberGlyph $size={23}>%</NumberGlyph></Tool>
                    <Tool $w={30}><CommaIcon /></Tool>
                    <Sep />
                    <Tool $w={33}><IncDecimal /></Tool>
                    <Tool $w={31}><DecDecimal /></Tool>
                  </ToolRow>
                </Stack>
              </GroupBody>
              <GroupLabel $inset={22}>Number</GroupLabel>
              <Launcher><LauncherIcon /></Launcher>
            </Group>

            <Group $w={242}>
              <GroupBody $pad={12}>
                <BigButton $w={84}>
                  <IconSlot $top={6}><CondIcon /></IconSlot>
                  <BigText>Conditional<BigLine>Formatting<Chevron s={7} /></BigLine></BigText>
                </BigButton>
                <BigButton $w={83}>
                  <IconSlot $top={6}><TableStyleIcon /></IconSlot>
                  <BigText>Format as<BigLine>Table<Chevron s={7} /></BigLine></BigText>
                </BigButton>
                <BigButton $w={48}>
                  <IconSlot $top={6}><CellStyleIcon /></IconSlot>
                  <BigText>Cell<BigLine>Styles<Chevron s={7} /></BigLine></BigText>
                </BigButton>
              </GroupBody>
              <GroupLabel $drop={6}>Styles</GroupLabel>
            </Group>

            <Group $w={180}>
              <GroupBody $pad={8}>
                <BigButton $w={55}>
                  <IconSlot $top={6}><InsertIcon /></IconSlot>
                  <BigText $dy={2}>Insert<BigLine><Chevron /></BigLine></BigText>
                </BigButton>
                <BigButton $w={55}>
                  <IconSlot $top={6}><DeleteIcon /></IconSlot>
                  <BigText $dy={2}>Delete<BigLine><Chevron /></BigLine></BigText>
                </BigButton>
                <BigButton $w={55}>
                  <IconSlot><FormatIcon /></IconSlot>
                  <BigText>Format<BigLine><Chevron /></BigLine></BigText>
                </BigButton>
              </GroupBody>
              <GroupLabel $drop={6}>Cells</GroupLabel>
            </Group>

            <Group $w={257}>
              <GroupBody>
                <EditStack>
                  <EditRow><EditIcon><SigmaIcon /></EditIcon>AutoSum<QuickGap $w={8} /><Chevron /></EditRow>
                  <EditRow><EditIcon><FillDownIcon /></EditIcon>Fill<Chevron s={7} /></EditRow>
                  <EditRow><EditIcon><ClearIcon /></EditIcon>Clear<Chevron s={7} /></EditRow>
                </EditStack>
                <BigButton $w={54}>
                  <IconSlot $top={3}><SortIcon /></IconSlot>
                  <BigText>Sort &amp;<BigLine>Filter<Chevron s={7} /></BigLine></BigText>
                </BigButton>
                <BigButton $w={62}>
                  <IconSlot $top={2}><FindIcon /></IconSlot>
                  <BigText>Find &amp;<BigLine>Select<Chevron s={7} /></BigLine></BigText>
                </BigButton>
              </GroupBody>
              <GroupLabel $drop={6}>Editing</GroupLabel>
            </Group>

            <Group $w={78}>
              <GroupBody>
                <BigButton $w={77}>
                  <IconSlot><AnalyzeIcon /></IconSlot>
                  <BigText>Analyze<BigLine>Data</BigLine></BigText>
                </BigButton>
              </GroupBody>
              <GroupLabel $drop={6}>Analysis</GroupLabel>
            </Group>

            <Group $w={90}>
              <GroupBody>
                <BigButton $w={89} $muted>
                  <IconSlot><SensitivityIcon /></IconSlot>
                  <BigText>Sensitivity<BigLine><Chevron c="#666" /></BigLine></BigText>
                </BigButton>
              </GroupBody>
              <GroupLabel $drop={6}>Sensitivity</GroupLabel>
            </Group>

            <CollapseSlot><Chevron s={12} /></CollapseSlot>
          </Ribbon>

          <FormulaRow>
            <NameBox>C8<Chevron s={10} /></NameBox>
            <Dots><i /><i /><i /></Dots>
            <FxBox>
              <svg width="16" height="16" viewBox="0 0 16 16" stroke="#777" strokeWidth="1.300"><path d="M1 1l14 14M15 1L1 15" /></svg>
              <svg width="18" height="14" viewBox="0 0 18 14" fill="none" stroke="#777" strokeWidth="1.300"><path d="M1 8l5 5L17 1" /></svg>
              <FxMark>fx</FxMark>
            </FxBox>
            <FormulaInput><Chevron s={11} /></FormulaInput>
          </FormulaRow>

          <SheetRow>
            <Sheet />
            <ScrollTrack>
              <svg width="11" height="7" viewBox="0 0 11 7"><path d="M0 7L5.500 0 11 7z" fill="#999" /></svg>
              <ScrollThumb />
              <svg width="11" height="7" viewBox="0 0 11 7"><path d="M0 0l5.500 7L11 0z" fill="#999" /></svg>
            </ScrollTrack>
          </SheetRow>
          <Strip>
            <StripLeft $w={499} />
            <StripGap />
            <StripRight />
          </Strip>

          <Taskbar>
            {TASK_ICONS.map((t, i) => (
              <TaskItem key={i} $active={t.active}>
                {t.icon}
                {t.badge ? <ChromeBadge /> : null}
                {t.dot ? <TaskDot /> : null}
                {t.active ? <TaskDot $active /> : null}
              </TaskItem>
            ))}
            <Tray>
              <svg width="16" height="9" viewBox="0 0 16 9" fill="none" stroke="#eee" strokeWidth="1.200"><path d="M1 8l7-7 7 7" /></svg>
              <QuickGap $w={17} />
              <svg width="19" height="15" viewBox="0 0 19 15" fill="none" stroke="#eee" strokeWidth="1.400"><path d="M1 5c5-5 12-5 17 0M4 8c3-3 8-3 11 0M7 11c1.500-1 3.500-1 5 0" /><circle cx="9.500" cy="13.500" r="1" fill="#eee" /></svg>
              <QuickGap $w={11} />
              <svg width="19" height="15" viewBox="0 0 19 15" fill="none" stroke="#eee" strokeWidth="1.200"><path d="M1 5h3l4-4v13l-4-4H1zM11 4.500c1.500 1.500 1.500 4.500 0 6M14 2.500c3 3 3 7 0 10" /></svg>
              <QuickGap $w={11} />
              <BatteryIcon />
              <Clock>6:34 AM<br />7/14/2023</Clock>
              <NotifyBadge>3</NotifyBadge>
            </Tray>
          </Taskbar>
        </Screen>
      </Frame>
    </Page>
  )
}
